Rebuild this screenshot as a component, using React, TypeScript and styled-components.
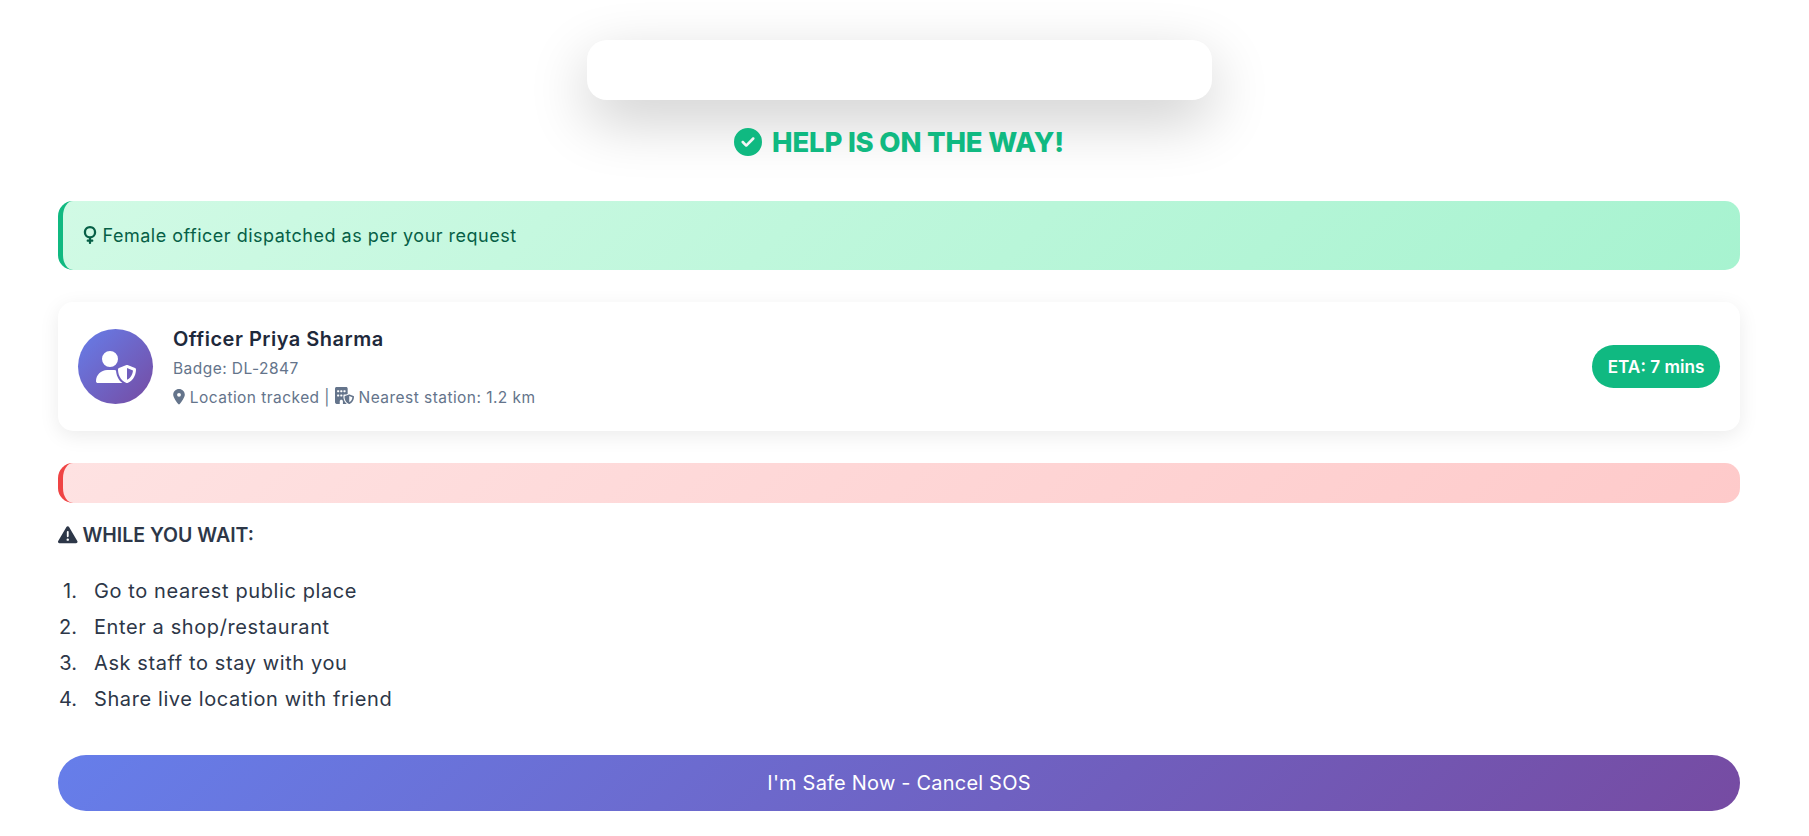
import React from 'react';
import styled, { createGlobalStyle } from 'styled-components';
import {
  FaBuildingShield,
  FaCircleCheck,
  FaLocationDot,
  FaTriangleExclamation,
  FaUserShield,
  FaVenus,
} from 'react-icons/fa6';

const GlobalStyle = createGlobalStyle`
  * {
    box-sizing: border-box;
  }

  body {
    margin: 0;
    background: #ffffff;
    font-family: 'Inter', 'Liberation Sans', sans-serif;
    color: #334155;
  }
`;

const Page = styled.div`
  height: 836px;
  overflow: hidden;
  padding: 40px 69px 0 58px;
`;

const StatusBox = styled.div`
  width: 625px;
  height: 60px;
  margin: 0 auto 16px;
  background: #ffffff;
  border-radius: 20px;
  box-shadow: 0 20px 60px rgba(0, 0, 0, 0.2);
`;

const Title = styled.h2`
  display: flex;
  align-items: center;
  justify-content: center;
  gap: 10px;
  height: 52px;
  margin: 0 0 33px;
  color: #10b981;
  font-size: 27.5px;
  font-weight: 800;
  letter-spacing: -0.2px;

  svg {
    font-size: 28px;
  }
`;

const Alert = styled.div<{ $tone: 'green' | 'red' }>`
  min-height: 40px;
  padding: 20px;
  margin-bottom: 32px;
  border-radius: 15px;
  border-left: 5px solid ${(p) => (p.$tone === 'green' ? '#10b981' : '#ef4444')};
  background: ${(p) =>
    p.$tone === 'green'
      ? 'linear-gradient(135deg, #d1fae5, #a7f3d0)'
      : 'linear-gradient(135deg, #fee2e2, #fecaca)'};
  color: #065f46;
  font-size: 18px;
  line-height: 29px;
  letter-spacing: 0.5px;

  svg {
    width: 14px;
    vertical-align: -2px;
  }

  &:empty {
    margin-bottom: 0;
  }
`;

const OfficerCard = styled.div`
  display: flex;
  align-items: center;
  gap: 20px;
  height: 129px;
  padding: 20px;
  margin-bottom: 32px;
  background: #ffffff;
  border-radius: 15px;
  box-shadow: 0 5px 20px rgba(0, 0, 0, 0.08);
`;

const Avatar = styled.div`
  display: flex;
  align-items: center;
  justify-content: center;
  flex: none;
  width: 75px;
  height: 75px;
  border-radius: 50%;
  background: linear-gradient(135deg, #667eea, #764ba2);
  color: #ffffff;
  font-size: 40px;
`;

const OfficerInfo = styled.div`
  flex: 1;
  padding-top: 3px;
`;

const OfficerName = styled.div`
  color: #1e293b;
  font-size: 20px;
  font-weight: 600;
  line-height: 33px;
  letter-spacing: 0.5px;
`;

const OfficerMeta = styled.div`
  color: #64748b;
  font-size: 15.5px;
  line-height: 26px;
  letter-spacing: 0.45px;

  svg {
    vertical-align: -2px;
  }
`;

const OfficerTracking = styled(OfficerMeta)`
  line-height: 32px;
`;

const LocationIcon = styled(FaLocationDot)`
  width: 12px;
`;

const StationIcon = styled(FaBuildingShield)`
  font-size: 19px;
`;

const EtaBadge = styled.div`
  flex: none;
  width: 128px;
  height: 43px;
  border-radius: 25px;
  background: #10b981;
  color: #ffffff;
  font-size: 17.2px;
  font-weight: 600;
  line-height: 43px;
  text-align: center;
`;

const WaitHeading = styled.h3`
  margin: 16px 0 22px;
  color: #2d3748;
  font-size: 19.5px;
  font-weight: 600;
  line-height: 32px;

  svg {
    vertical-align: -2px;
  }
`;

const Steps = styled.ol`
  margin: 0 0 38px;
  padding: 0;
  list-style: none;
  counter-reset: step;
  color: #2d3748;
  font-size: 20px;
  line-height: 36px;
  letter-spacing: 0.6px;
`;

const Step = styled.li`
  display: flex;
  gap: 17px;
  counter-increment: step;

  &::before {
    content: counter(step) '.';
    width: 19px;
    text-align: right;
    letter-spacing: 0;
  }
`;

const SafeButton = styled.button`
  display: block;
  width: 100%;
  height: 56px;
  border: none;
  border-radius: 30px;
  background: linear-gradient(135deg, #667eea, #764ba2);
  color: #ffffff;
  font-family: inherit;
  font-size: 20px;
  letter-spacing: 0.2px;
`;

const steps = [
  'Go to nearest public place',
  'Enter a shop/restaurant',
  'Ask staff to stay with you',
  'Share live location with friend',
];

export default function App() {
  return (
    <Page>
      <GlobalStyle />
      <StatusBox />
      <Title>
        <FaCircleCheck /> HELP IS ON THE WAY!
      </Title>
      <Alert $tone="green">
        <FaVenus /> Female officer dispatched as per your request
      </Alert>
      <OfficerCard>
        <Avatar>
          <FaUserShield />
        </Avatar>
        <OfficerInfo>
          <OfficerName>Officer Priya Sharma</OfficerName>
          <OfficerMeta>Badge: DL-2847</OfficerMeta>
          <OfficerTracking>
            <LocationIcon /> Location tracked | <StationIcon /> Nearest station: 1.2 km
          </OfficerTracking>
        </OfficerInfo>
        <EtaBadge>ETA: 7 mins</EtaBadge>
      </OfficerCard>
      <Alert $tone="red" />
      <WaitHeading>
        <FaTriangleExclamation /> WHILE YOU WAIT:
      </WaitHeading>
      <Steps>
        {steps.map((step) => (
          <Step key={step}>{step}</Step>
        ))}
      </Steps>
      <SafeButton>I'm Safe Now - Cancel SOS</SafeButton>
    </Page>
  );
}
